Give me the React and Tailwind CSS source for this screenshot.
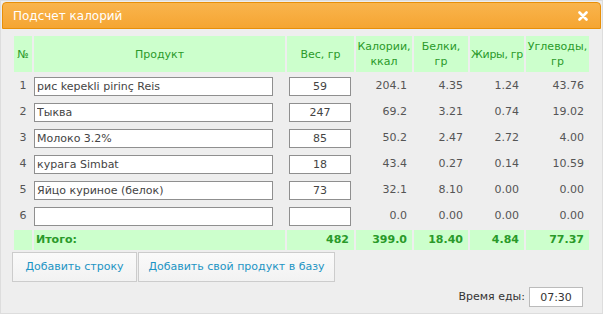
import React from 'react';

const rows = [
  { n: 1, name: 'рис kepekli pirinç Reis', w: '59', kcal: '204.1', p: '4.35', f: '1.24', c: '43.76' },
  { n: 2, name: 'Тыква', w: '247', kcal: '69.2', p: '3.21', f: '0.74', c: '19.02' },
  { n: 3, name: 'Молоко 3.2%', w: '85', kcal: '50.2', p: '2.47', f: '2.72', c: '4.00' },
  { n: 4, name: 'курага Simbat', w: '18', kcal: '43.4', p: '0.27', f: '0.14', c: '10.59' },
  { n: 5, name: 'Яйцо куриное (белок)', w: '73', kcal: '32.1', p: '8.10', f: '0.00', c: '0.00' },
  { n: 6, name: '', w: '', kcal: '0.0', p: '0.00', f: '0.00', c: '0.00' },
];

export default function App() {
  const th = 'bg-[#ccffcc] text-[#2a9a2a] font-normal text-center leading-[15px] p-0 whitespace-nowrap';
  const num = 'text-right pr-[5px] text-[#555]';
  const tot = 'bg-[#ccffcc] text-[#2a9a2a] font-bold text-right pr-[5px]';

  return (
    <div className="w-[603px] h-[314px] bg-[#eeeeee] border border-[#dddddd] p-px font-['DejaVu_Sans',sans-serif] text-[11px] text-[#333] overflow-hidden">
      {/* Title bar */}
      <div className="h-[27px] rounded-t-[4px] border border-[#e78f08] bg-gradient-to-b from-[#f9b44c] to-[#f5a531] flex items-center justify-between pl-[10px] pr-[12px]">
        <span className="text-white text-[12px]">Подсчет калорий</span>
        <svg width="10" height="10" viewBox="0 0 10 10">
          <path d="M1.5 1.5 L8.5 8.5 M8.5 1.5 L1.5 8.5" stroke="white" strokeWidth="2.6" strokeLinecap="round" />
        </svg>
      </div>

      <div className="pl-[10px] pt-[5px]">
        <table className="table-fixed border-separate border-spacing-[2px] w-[579px]">
          <colgroup>
            <col className="w-[18px]" />
            <col className="w-[251px]" />
            <col className="w-[67px]" />
            <col className="w-[56px]" />
            <col className="w-[54px]" />
            <col className="w-[54px]" />
            <col className="w-[63px]" />
          </colgroup>
          <thead>
            <tr className="h-[36px]">
              <th className={th}>№</th>
              <th className={th}>Продукт</th>
              <th className={th}>Вес, гр</th>
              <th className={th}>Калории,<br />ккал</th>
              <th className={th}>Белки,<br />гр</th>
              <th className={`${th} tracking-[-0.3px]`}>Жиры, гр</th>
              <th className={th}>Углеводы,<br />гр</th>
            </tr>
          </thead>
          <tbody>
            {rows.map((r) => (
              <tr key={r.n} className="h-[24px]">
                <td className="text-center text-[#555]">{r.n}</td>
                <td>
                  <input
                    readOnly
                    value={r.name}
                    className="w-[239px] h-[19px] bg-white border border-[#8f8f8f] px-[2px] text-[11px] text-[#444] outline-none"
                  />
                </td>
                <td>
                  <input
                    readOnly
                    value={r.w}
                    className="ml-[2px] w-[62px] h-[19px] bg-white border border-[#8f8f8f] text-center text-[11px] text-[#444] outline-none"
                  />
                </td>
                <td className={num}>{r.kcal}</td>
                <td className={num}>{r.p}</td>
                <td className={num}>{r.f}</td>
                <td className={num}>{r.c}</td>
              </tr>
            ))}
            <tr className="h-[20px]">
              <td className="bg-[#ccffcc]"></td>
              <td className="bg-[#ccffcc] text-[#2a9a2a] font-bold pl-[2px]">Итого:</td>
              <td className={tot}>482</td>
              <td className={tot}>399.0</td>
              <td className={tot}>18.40</td>
              <td className={tot}>4.84</td>
              <td className={tot}>77.37</td>
            </tr>
          </tbody>
        </table>

        <div className="flex gap-px">
          <button className="h-[30px] w-[125px] bg-gradient-to-b from-[#fafafa] to-[#f2f2f2] border border-[#cccccc] text-[#1c94c4] text-[11px]">
            Добавить строку
          </button>
          <button className="h-[30px] w-[197px] bg-gradient-to-b from-[#fafafa] to-[#f2f2f2] border border-[#cccccc] text-[#1c94c4] text-[11px]">
            Добавить свой продукт в базу
          </button>
        </div>

        <div className="flex items-center justify-end gap-[4px] pr-[18px] mt-[5px]">
          <span className="text-[#333]">Время еды:</span>
          <input
            readOnly
            value="07:30"
            className="w-[54px] h-[20px] bg-white border border-[#bbb] text-center text-[11px] text-[#333] outline-none"
          />
        </div>
      </div>
    </div>
  );
}
